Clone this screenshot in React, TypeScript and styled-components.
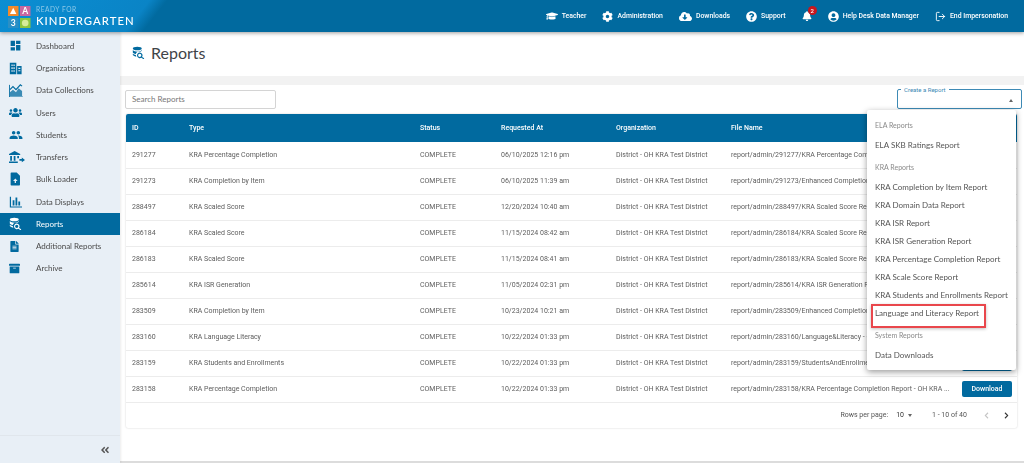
import React from 'react';
import styled, { createGlobalStyle } from 'styled-components';
import {
  FaGraduationCap,
  FaCog,
  FaCloudDownloadAlt,
  FaQuestionCircle,
  FaBell,
  FaUserCircle,
  FaUsers,
  FaFileAlt,
  FaArchive,
  FaAngleDoubleLeft,
  FaChevronLeft,
  FaChevronRight,
} from 'react-icons/fa';
import { MdDashboard, MdPeople } from 'react-icons/md';
import { LogOut } from 'lucide-react';

const BLUE = '#016a9f';

const GlobalStyle = createGlobalStyle`
  html, body {
    margin: 0;
    padding: 0;
    background: #fff;
    overflow: hidden;
  }
  * {
    box-sizing: border-box;
  }
`;

const Page = styled.div`
  width: 1024px;
  height: 463px;
  display: flex;
  flex-direction: column;
  font-family: Lato, sans-serif;
  color: #4a4a4a;
`;

const Header = styled.header`
  position: relative;
  z-index: 3;
  height: 32px;
  flex: none;
  display: flex;
  align-items: center;
  justify-content: space-between;
  padding: 0 16px 0 8px;
  background: linear-gradient(128deg, #0b8ed3 0, #0a84c6 118px, ${BLUE} 132px);
  box-shadow: 0 1px 4px rgba(0, 0, 0, 0.4);
`;

const Brand = styled.div`
  display: flex;
  align-items: center;
  gap: 5px;
`;

const BrandText = styled.div`
  display: flex;
  flex-direction: column;
  color: #fff;
  line-height: 1;
`;

const BrandTop = styled.span`
  font-size: 6.6px;
  letter-spacing: 0.55px;
  color: #8cc8e8;
`;

const BrandName = styled.span`
  font-size: 11.3px;
  font-weight: 500;
  letter-spacing: 1.05px;
  margin-top: 2px;
`;

const TopNav = styled.nav`
  display: flex;
  align-items: center;
  gap: 16px;
`;

const TopLink = styled.span`
  display: flex;
  align-items: center;
  gap: 4px;
  font-family: Roboto, sans-serif;
  font-size: 6.9px;
  font-weight: 500;
  color: #fff;
  white-space: nowrap;

  svg {
    flex: none;
  }
`;

const BellWrap = styled.span`
  position: relative;
  display: flex;
  color: #fff;
`;

const Badge = styled.span`
  position: absolute;
  top: -5px;
  right: -5px;
  width: 9px;
  height: 9px;
  border-radius: 50%;
  background: #c8161d;
  color: #fff;
  font: 500 6px/9px Roboto, sans-serif;
  text-align: center;
`;

const Body = styled.div`
  flex: 1;
  display: flex;
  min-height: 0;
`;

const Sidebar = styled.aside`
  width: 120px;
  flex: none;
  display: flex;
  flex-direction: column;
  padding-top: 2.8px;
  background: #e8eff6;
  box-shadow: 1px 0 2px rgba(0, 0, 0, 0.08);
  position: relative;
  z-index: 1;
`;

const SideItem = styled.div<{ $active?: boolean }>`
  height: 22.25px;
  display: flex;
  align-items: center;
  font-size: 8px;
  background: ${({ $active }) => ($active ? BLUE : 'transparent')};
  color: ${({ $active }) => ($active ? '#fff' : '#4a4a4a')};

  svg {
    color: ${({ $active }) => ($active ? '#fff' : BLUE)};
  }
`;

const SideIcon = styled.span`
  width: 36px;
  padding-left: 9px;
  flex: none;
  display: flex;
  align-items: center;
`;

const Collapse = styled.div`
  margin-top: auto;
  height: 28px;
  flex: none;
  display: flex;
  align-items: center;
  justify-content: flex-end;
  padding-right: 10px;
  border-top: 1px solid #e0e6ec;
  color: #555;
`;

const Main = styled.main`
  flex: 1;
  min-width: 0;
  display: flex;
  flex-direction: column;
  background: #fff;
`;

const TitleBar = styled.div`
  height: 44px;
  flex: none;
  display: flex;
  align-items: center;
  gap: 6px;
  padding: 0 0 3px 12px;
  color: ${BLUE};
`;

const Title = styled.h1`
  margin: 0;
  font-size: 16px;
  font-weight: 400;
  color: #3f4448;
`;

const Band = styled.div`
  height: 9px;
  flex: none;
  background: #f2f2f2;
`;

const Content = styled.div`
  position: relative;
  flex: 1;
  padding: 5px 7px 0 5px;
  border-bottom: 2px solid #dcdcdc;
`;

const Toolbar = styled.div`
  display: flex;
  justify-content: space-between;
  height: 24px;
`;

const Search = styled.div`
  width: 151px;
  height: 19px;
  display: flex;
  align-items: center;
  padding: 0 0 1px 6px;
  border: 1px solid #d4d4d4;
  border-radius: 2px;
  font-size: 8px;
  color: #777;
`;

const CreateField = styled.div`
  position: relative;
  width: 125px;
  height: 20px;
  margin: -1px -5px 0 0;
  border: 1px solid #3d8ab5;
  border-radius: 2px;
`;

const CreateLabel = styled.span`
  position: absolute;
  top: -4px;
  left: 3px;
  padding: 0 3px;
  background: #fff;
  font: 400 6px/7px Roboto, sans-serif;
  color: #3d8ab5;
`;

const Caret = styled.span`
  position: absolute;
  top: 9px;
  right: 8px;
  width: 0;
  height: 0;
  border-left: 2.5px solid transparent;
  border-right: 2.5px solid transparent;
  border-bottom: 3px solid #666;
`;

const Card = styled.div`
  margin-left: 1px;
  border-radius: 2px;
  box-shadow: 0 0 2px rgba(0, 0, 0, 0.2);
  overflow: hidden;
  will-change: opacity;
`;

const Table = styled.table`
  width: 100%;
  border-collapse: collapse;
  table-layout: fixed;
  font-family: Roboto, sans-serif;
  font-size: 7px;
`;

const HeadCell = styled.th<{ $w?: number }>`
  width: ${({ $w }) => ($w ? `${$w}px` : 'auto')};
  height: 28px;
  padding: 0 0 1px 6px;
  background: ${BLUE};
  color: #fff;
  font-weight: 500;
  text-align: left;
`;

const Row = styled.tr`
  height: 26px;
  border-bottom: 1px solid #ececec;
`;

const Cell = styled.td`
  padding: 0 0 0 6px;
  color: #5d5d5d;
  white-space: nowrap;
  overflow: hidden;
`;

const FileRow = styled.div`
  display: flex;
  align-items: center;
  justify-content: space-between;
  padding-right: 5px;
`;

const DownloadBtn = styled.span`
  width: 50px;
  height: 16px;
  flex: none;
  display: flex;
  align-items: center;
  justify-content: center;
  border-radius: 2px;
  background: ${BLUE};
  color: #fff;
  font-weight: 500;
  font-size: 7px;
`;

const Pager = styled.div`
  height: 25px;
  display: flex;
  align-items: center;
  justify-content: flex-end;
  padding-right: 7px;
  font-family: Roboto, sans-serif;
  font-size: 7px;
  color: #555;
`;

const PerPage = styled.span`
  display: flex;
  align-items: center;
  gap: 4px;
  margin: 0 20px 0 8px;
  color: #333;
`;

const SmallCaret = styled.span`
  width: 0;
  height: 0;
  border-left: 2.5px solid transparent;
  border-right: 2.5px solid transparent;
  border-top: 3px solid #666;
`;

const PagerArrows = styled.span`
  display: flex;
  align-items: center;
  gap: 13px;
  margin-left: 16px;
`;

const Menu = styled.div`
  position: absolute;
  top: 25px;
  right: 8px;
  z-index: 2;
  width: 149px;
  height: 260px;
  padding-top: 6px;
  background: #fff;
  border-radius: 2px;
  box-shadow: 0 2px 6px rgba(0, 0, 0, 0.4);
  overflow: hidden;
`;

const MenuHeading = styled.div<{ $gap?: number }>`
  height: 18px;
  margin-top: ${({ $gap }) => $gap || 0}px;
  display: flex;
  align-items: center;
  padding-left: 8px;
  font-size: 7px;
  color: #8a8a8a;
`;

const MenuItem = styled.div<{ $tall?: boolean }>`
  height: ${({ $tall }) => ($tall ? '22px' : '18px')};
  display: flex;
  align-items: center;
  padding-left: 8px;
  font-size: 8px;
  color: #555;
  white-space: nowrap;
`;

const MenuGroup = styled.div`
  padding-top: 2px;
`;

const MenuCallout = styled.span`
  position: absolute;
  left: 4px;
  top: 194px;
  width: 115px;
  height: 24px;
  border: 2px solid #e9474c;
  box-shadow: 0 1px 3px rgba(0, 0, 0, 0.25);
`;

const Logo = () => (
  <svg width="23" height="23" viewBox="0 0 23 23" aria-hidden="true">
    <rect x="0" y="1" width="10.500" height="10" fill="#f08a2c" />
    <polygon points="5.200,2.800 8.400,9 2,9" fill="#fff" />
    <rect x="12" y="1" width="10.500" height="10" fill="#c9679f" />
    <text x="17.200" y="9.300" fontSize="8.500" fontWeight="700" fontFamily="Lato, sans-serif" fill="#fff" textAnchor="middle">A</text>
    <rect x="0" y="13" width="10.500" height="10" fill="#2b8fc4" />
    <text x="5.200" y="21.200" fontSize="8.500" fontWeight="700" fontFamily="Lato, sans-serif" fill="#fff" textAnchor="middle">3</text>
    <rect x="12" y="13" width="10.500" height="10" fill="#8dc63f" />
    <circle cx="17.200" cy="18" r="3.300" fill="#d5ec9a" />
  </svg>
);

const ReportsIcon = ({ size = 13 }: { size?: number }) => (
  <svg width={size} height={size} viewBox="0 0 16 16" fill="currentColor" aria-hidden="true">
    <ellipse cx="6.500" cy="3" rx="5.500" ry="2.200" />
    <path d="M1 5c1 1.400 3.200 2 5.500 2s4.500-.6 5.500-2v1.200c-.6.2-1.200.5-1.700.9H7.600C6 7.500 5 8.500 4.800 9.900 2.900 9.600 1.500 8.900 1 8z" />
    <path d="M1 9.600c.8.800 2 1.300 3.700 1.600.1.600.4 1.200.7 1.700C3.500 12.800 1.700 12 1 11z" />
    <path d="M9.500 8a3.500 3.500 0 0 1 2.900 5.400l2.700 1.700-.8 1.200-2.800-1.800A3.500 3.500 0 1 1 9.500 8zm0 1.500a2 2 0 1 0 0 4 2 2 0 0 0 0-4z" />
  </svg>
);

const OrgIcon = () => (
  <svg width="13" height="13" viewBox="0 0 16 16" fill="currentColor" aria-hidden="true">
    <path fillRule="evenodd" d="M1 1h8v14H1zM3 3v2h1.500V3zm2.500 0v2H7V3zM3 6.500v2h1.500v-2zm2.500 0v2H7v-2zM3 10v2h1.500v-2zm2.500 0v2H7v-2z" />
    <path fillRule="evenodd" d="M10 5h5.500v10H10zm1.500 2v1.500h2.500V7zm0 3v1.500h2.500V10z" />
  </svg>
);

const CollectionsIcon = () => (
  <svg width="14" height="13" viewBox="0 0 16 15" fill="currentColor" aria-hidden="true">
    <path d="M1 14V9.500l3.500-3 3.500 3 3-4.500 4 3V14z" opacity="0.75" />
    <path d="M1 6.500l3.500-3.500 3.500 3.500L13 1l2 1.500" fill="none" stroke="currentColor" strokeWidth="1.300" />
    <path d="M0.500 1v14H16" fill="none" stroke="currentColor" strokeWidth="1" />
  </svg>
);

const TransfersIcon = () => (
  <svg width="16" height="13" viewBox="0 0 20 16" fill="currentColor" aria-hidden="true">
    <path d="M7 0l7 3.500V5H0V3.500z" />
    <path d="M1.500 6h2.200v6H1.500zM5.900 6h2.200v6H5.900zM10.300 6h2.200v3H10.300zM0 13h11v2H0z" />
    <path d="M13 10h3V8l4 3-4 3v-2h-3z" />
  </svg>
);

const BulkIcon = () => (
  <svg width="13" height="14" viewBox="0 0 16 16" fill="currentColor" aria-hidden="true">
    <path fillRule="evenodd" d="M3 0h6.500L13.500 4v11a1 1 0 0 1-1 1H3a1 1 0 0 1-1-1V1a1 1 0 0 1 1-1zm4.800 7.500L5 10.500h2V13h1.600v-2.500h2z" />
  </svg>
);

const DisplaysIcon = () => (
  <svg width="13" height="13" viewBox="0 0 16 16" fill="currentColor" aria-hidden="true">
    <path d="M1 2h1.500v12H16v1.500H1z" />
    <path d="M4.500 6.500h2.200V13H4.500zM8 3h2.200v10H8zM11.500 8h2.200v5h-2.200z" />
  </svg>
);

const sideItems: { label: string; icon: React.ReactNode; active?: boolean }[] = [
  { label: 'Dashboard', icon: <MdDashboard size={13} /> },
  { label: 'Organizations', icon: <OrgIcon /> },
  { label: 'Data Collections', icon: <CollectionsIcon /> },
  { label: 'Users', icon: <FaUsers size={13} /> },
  { label: 'Students', icon: <MdPeople size={14} /> },
  { label: 'Transfers', icon: <TransfersIcon /> },
  { label: 'Bulk Loader', icon: <BulkIcon /> },
  { label: 'Data Displays', icon: <DisplaysIcon /> },
  { label: 'Reports', icon: <ReportsIcon />, active: true },
  { label: 'Additional Reports', icon: <FaFileAlt size={11} /> },
  { label: 'Archive', icon: <FaArchive size={11} /> },
];

const ORG = 'District - OH KRA Test District';

const rows = [
  ['291277', 'KRA Percentage Completion', '06/10/2025 12:16 pm', 'report/admin/291277/KRA Percentage Completion Report - OH KRA ...'],
  ['291273', 'KRA Completion by Item', '06/10/2025 11:39 am', 'report/admin/291273/Enhanced Completion by Item Report - OH KRA ...'],
  ['288497', 'KRA Scaled Score', '12/20/2024 10:40 am', 'report/admin/288497/KRA Scaled Score Report - OH KRA Test ...'],
  ['286184', 'KRA Scaled Score', '11/15/2024 08:42 am', 'report/admin/286184/KRA Scaled Score Report - OH KRA Test ...'],
  ['286183', 'KRA Scaled Score', '11/15/2024 08:41 am', 'report/admin/286183/KRA Scaled Score Report - OH KRA Test ...'],
  ['285614', 'KRA ISR Generation', '11/05/2024 02:31 pm', 'report/admin/285614/KRA ISR Generation Report - OH KRA Test ...'],
  ['283509', 'KRA Completion by Item', '10/23/2024 10:21 am', 'report/admin/283509/Enhanced Completion by Item Report - OH ...'],
  ['283160', 'KRA Language Literacy', '10/22/2024 01:33 pm', 'report/admin/283160/Language&Literacy - OH KRA Test District ...'],
  ['283159', 'KRA Students and Enrollments', '10/22/2024 01:33 pm', 'report/admin/283159/StudentsAndEnrollments - OH KRA Test ...'],
  ['283158', 'KRA Percentage Completion', '10/22/2024 01:33 pm', 'report/admin/283158/KRA Percentage Completion Report - OH KRA ...'],
];

const kraItems = [
  'KRA Completion by Item Report',
  'KRA Domain Data Report',
  'KRA ISR Report',
  'KRA ISR Generation Report',
  'KRA Percentage Completion Report',
  'KRA Scale Score Report',
  'KRA Students and Enrollments Report',
  'Language and Literacy Report',
];

export default function App() {
  return (
    <Page>
      <GlobalStyle />
      <Header>
        <Brand>
          <Logo />
          <BrandText>
            <BrandTop>READY FOR</BrandTop>
            <BrandName>KINDERGARTEN</BrandName>
          </BrandText>
        </Brand>
        <TopNav>
          <TopLink><FaGraduationCap size={12} />Teacher</TopLink>
          <TopLink><FaCog size={11} />Administration</TopLink>
          <TopLink><FaCloudDownloadAlt size={13} />Downloads</TopLink>
          <TopLink><FaQuestionCircle size={11} />Support</TopLink>
          <BellWrap><FaBell size={10} /><Badge>2</Badge></BellWrap>
          <TopLink><FaUserCircle size={11} />Help Desk Data Manager</TopLink>
          <TopLink><LogOut size={11} />End Impersonation</TopLink>
        </TopNav>
      </Header>
      <Body>
        <Sidebar>
          {sideItems.map((item) => (
            <SideItem key={item.label} $active={item.active}>
              <SideIcon>{item.icon}</SideIcon>
              {item.label}
            </SideItem>
          ))}
          <Collapse><FaAngleDoubleLeft size={10} /></Collapse>
        </Sidebar>
        <Main>
          <TitleBar>
            <ReportsIcon size={13} />
            <Title>Reports</Title>
          </TitleBar>
          <Band />
          <Content>
            <Toolbar>
              <Search>Search Reports</Search>
              <CreateField>
                <CreateLabel>Create a Report</CreateLabel>
                <Caret />
              </CreateField>
            </Toolbar>
            <Card>
              <Table>
                <thead>
                  <tr>
                    <HeadCell $w={57}>ID</HeadCell>
                    <HeadCell $w={231}>Type</HeadCell>
                    <HeadCell $w={81}>Status</HeadCell>
                    <HeadCell $w={115}>Requested At</HeadCell>
                    <HeadCell $w={115}>Organization</HeadCell>
                    <HeadCell>File Name</HeadCell>
                  </tr>
                </thead>
                <tbody>
                  {rows.map(([id, type, at, file]) => (
                    <Row key={id}>
                      <Cell>{id}</Cell>
                      <Cell>{type}</Cell>
                      <Cell>COMPLETE</Cell>
                      <Cell>{at}</Cell>
                      <Cell>{ORG}</Cell>
                      <Cell>
                        <FileRow>
                          {file}
                          <DownloadBtn>Download</DownloadBtn>
                        </FileRow>
                      </Cell>
                    </Row>
                  ))}
                </tbody>
              </Table>
              <Pager>
                Rows per page:
                <PerPage>10 <SmallCaret /></PerPage>
                1 - 10 of 40
                <PagerArrows>
                  <FaChevronLeft size={7} color="#c4c4c4" />
                  <FaChevronRight size={7} color="#333" />
                </PagerArrows>
              </Pager>
            </Card>
            <Menu>
              <MenuHeading>ELA Reports</MenuHeading>
              <MenuItem $tall>ELA SKB Ratings Report</MenuItem>
              <MenuHeading $gap={2}>KRA Reports</MenuHeading>
              <MenuGroup>
                {kraItems.map((label) => (
                  <MenuItem key={label}>{label}</MenuItem>
                ))}
              </MenuGroup>
              <MenuHeading $gap={4}>System Reports</MenuHeading>
              <MenuItem $tall>Data Downloads</MenuItem>
              <MenuCallout />
            </Menu>
          </Content>
        </Main>
      </Body>
    </Page>
  );
}
